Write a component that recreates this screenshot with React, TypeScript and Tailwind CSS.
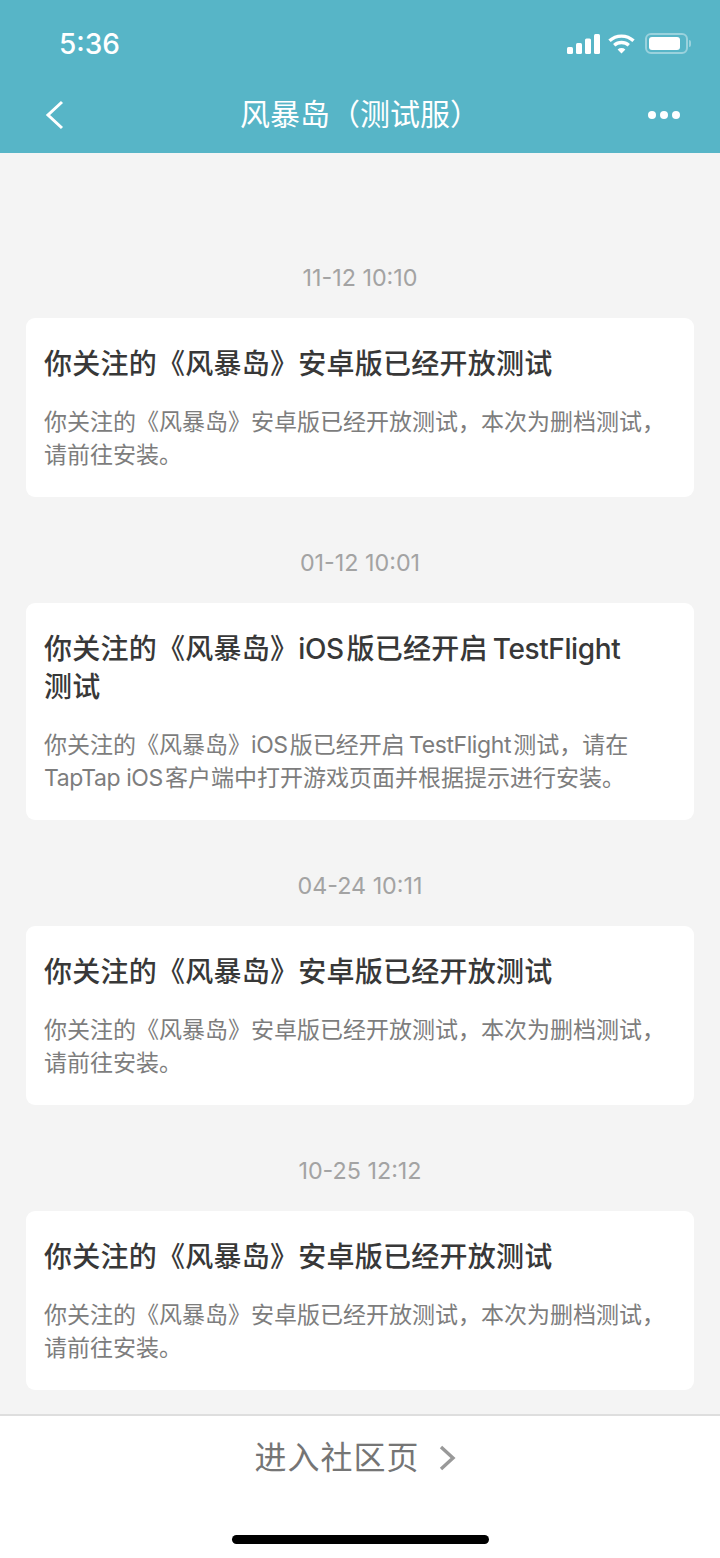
import type { ReactNode } from 'react';

const Latin = ({ children }: { children: ReactNode }) => <span className="tracking-[-0.4px]">{children}</span>;

const androidTitle = '你关注的《风暴岛》安卓版已经开放测试';
const androidBody = '你关注的《风暴岛》安卓版已经开放测试，本次为删档测试，请前往安装。';

const notices: { id: number; time: string; title: ReactNode; body: ReactNode }[] = [
  { id: 1, time: '11-12 10:10', title: androidTitle, body: androidBody },
  {
    id: 2,
    time: '01-12 10:01',
    title: <>你关注的《风暴岛》<Latin>iOS</Latin>{'\u200a'}版已经开启{'\u2009'}<Latin>TestFlight</Latin>{'\n'}测试</>,
    body: <>你关注的《风暴岛》<Latin>iOS</Latin>{'\u200a'}版已经开启{'\u2009'}<Latin>TestFlight</Latin>{'\u200a'}测试，请在 <Latin>TapTap iOS</Latin>{'\u200a'}客户端中打开游戏页面并根据提示进行安装。</>,
  },
  { id: 3, time: '04-24 10:11', title: androidTitle, body: androidBody },
  { id: 4, time: '10-25 12:12', title: androidTitle, body: androidBody },
];

const fontStack = "font-['Inter','Noto_Sans_CJK_SC',sans-serif]";

const StatusIcons = () => (
  <div className="flex items-center">
    <svg width="33" height="20" viewBox="0 0 33 20" fill="white">
      <rect x="0" y="13" width="6" height="7" rx="1.5" />
      <rect x="9" y="9" width="6" height="11" rx="1.5" />
      <rect x="18" y="4.5" width="6" height="15.5" rx="1.5" />
      <rect x="27" y="0" width="6" height="20" rx="1.5" />
    </svg>
    <svg className="ml-[8px]" width="27" height="20" viewBox="0 0 27 20" fill="none" stroke="white" strokeWidth="3.4">
      <path d="M1.5 6.8C8.2.5 18.8.5 25.5 6.8" />
      <path d="M6.2 11.2c4.2-3.7 10.4-3.7 14.6 0" />
      <path d="M13.5 19.6l-3.9-4.2c2.3-1.8 5.5-1.8 7.8 0z" fill="white" stroke="none" />
    </svg>
    <div className="ml-[10px] flex items-center">
      <div className="w-[43px] h-[21px] rounded-[6px] border-2 border-white/40 p-[2px]">
        <div className="w-[31px] h-full rounded-[3px] bg-white" />
      </div>
      <div className="ml-[1px] w-[2px] h-[7px] rounded-r-sm bg-white/40" />
    </div>
  </div>
);

const Header = () => (
  <div className="bg-[#57b5c7] h-[153px] shrink-0 text-white">
    <div className="h-[87px] pl-[59px] pr-[29px] flex items-center justify-between">
      <span className="text-[28px] font-medium leading-none">5:36</span>
      <StatusIcons />
    </div>
    <div className="relative h-[56px] flex items-center justify-center">
      <svg className="absolute left-[45px] top-[13px]" width="20" height="30" viewBox="0 0 20 30" fill="none" stroke="white" strokeWidth="3">
        <path d="M17 2L3 15l14 13" />
      </svg>
      <span className="text-[30px] leading-none pb-[2px]">风暴岛（测试服）</span>
      <div className="absolute left-[648px] top-[24px] flex gap-[4px]">
        <div className="w-[8px] h-[8px] rounded-full bg-white" />
        <div className="w-[8px] h-[8px] rounded-full bg-white" />
        <div className="w-[8px] h-[8px] rounded-full bg-white" />
      </div>
    </div>
  </div>
);

const NoticeCard = ({ time, title, body }: { time: string; title: ReactNode; body: ReactNode }) => (
  <div className="mb-[50px] last:mb-0">
    <p className="text-center text-[23.3px] leading-[30px] text-[#a3a3a3] pt-[1px] mb-[25px]">{time}</p>
    <div className="bg-white rounded-[9px] pt-[27px] pb-[25px] px-[18px]">
      <h2 className="whitespace-pre-line text-[28px] leading-[38px] font-medium text-[#383838] tracking-[0.25px]">{title}</h2>
      <p className="mt-[23px] text-[23px] leading-[33px] text-[#7d7d7d]">{body}</p>
    </div>
  </div>
);

export default function App() {
  return (
    <div className={`${fontStack} w-[720px] h-[1558px] flex flex-col bg-[#f4f4f4] overflow-hidden`}>
      <Header />
      <div className="flex-1 pt-[109px] px-[26px]">
        {notices.map((n) => (
          <NoticeCard key={n.id} time={n.time} title={n.title} body={n.body} />
        ))}
      </div>
      <div className="h-[144px] shrink-0 bg-white border-t-2 border-[#dedede] flex flex-col items-center">
        <div className="mt-[22px] mr-[10px] flex items-center">
          <span className="text-[32px] leading-[40px] text-[#757575] tracking-[1px]">进入社区页</span>
          <svg className="ml-[18px]" width="18" height="28" viewBox="0 0 18 28" fill="none" stroke="#999999" strokeWidth="3.4">
            <path d="M3 3l12 11L3 25" />
          </svg>
        </div>
        <div className="mt-[57px] w-[257px] h-[9px] rounded-full bg-black" />
      </div>
    </div>
  );
}
